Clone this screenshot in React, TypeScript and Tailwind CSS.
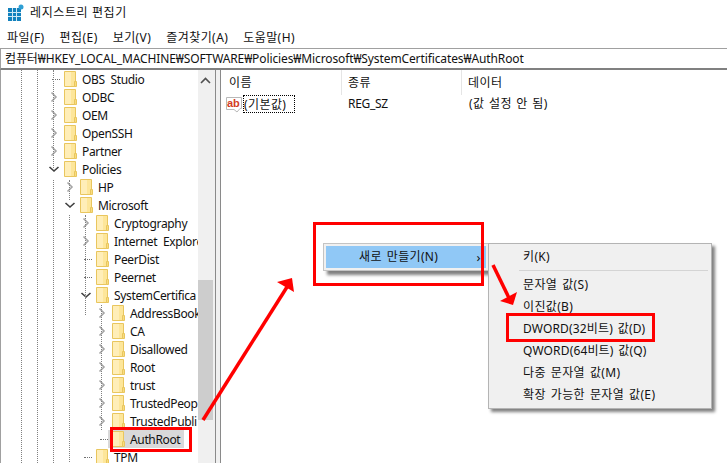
import React from 'react';

const FONT = '[font-family:"Noto_Sans","Noto_Sans_CJK_KR",sans-serif]';
const KO = 'tracking-[0.35px] [word-spacing:1.5px]';

type Node = { label: string; depth: number; mark: 'closed' | 'open' | 'none'; selected?: boolean };

const TREE: Node[] = [
    { label: 'OBS Studio', depth: 0, mark: 'none' },
    { label: 'ODBC', depth: 0, mark: 'closed' },
    { label: 'OEM', depth: 0, mark: 'closed' },
    { label: 'OpenSSH', depth: 0, mark: 'closed' },
    { label: 'Partner', depth: 0, mark: 'closed' },
    { label: 'Policies', depth: 0, mark: 'open' },
    { label: 'HP', depth: 1, mark: 'closed' },
    { label: 'Microsoft', depth: 1, mark: 'open' },
    { label: 'Cryptography', depth: 2, mark: 'closed' },
    { label: 'Internet Explore', depth: 2, mark: 'closed' },
    { label: 'PeerDist', depth: 2, mark: 'none' },
    { label: 'Peernet', depth: 2, mark: 'none' },
    { label: 'SystemCertifica', depth: 2, mark: 'open' },
    { label: 'AddressBook', depth: 3, mark: 'closed' },
    { label: 'CA', depth: 3, mark: 'closed' },
    { label: 'Disallowed', depth: 3, mark: 'closed' },
    { label: 'Root', depth: 3, mark: 'closed' },
    { label: 'trust', depth: 3, mark: 'closed' },
    { label: 'TrustedPeop', depth: 3, mark: 'closed' },
    { label: 'TrustedPubli', depth: 3, mark: 'closed' },
    { label: 'AuthRoot', depth: 3, mark: 'none', selected: true },
    { label: 'TPM', depth: 2, mark: 'none' },
];

const INDENT = ['pl-[47px]', 'pl-[63px]', 'pl-[79px]', 'pl-[95px]'];

function Folder() {
    return (
        <svg width="13" height="16" viewBox="0 0 13 16" className="shrink-0">
            <path d="M0.5 0.5H11.5V15.5H0.5Z" fill="#fde69a" stroke="#e9c65e" />
            <path d="M1 1H7V15H1Z" fill="#ffeeb8" />
            <path d="M10.5 10.5H12.5V15.5H10.5Z" fill="#f8dc80" stroke="#e9c65e" />
        </svg>
    );
}

function Mark({ type }: { type: Node['mark'] }) {
    if (type === 'closed') {
        return (
            <svg width="12" height="12" viewBox="0 0 12 12" className="shrink-0">
                <path d="M3.5 1.5L8 6L3.5 10.5" fill="none" stroke="#a6a6a6" strokeWidth="1.6" />
            </svg>
        );
    }
    if (type === 'open') {
        return (
            <svg width="12" height="12" viewBox="0 0 12 12" className="shrink-0">
                <path d="M1.5 4L6 8L10.5 4" fill="none" stroke="#404040" strokeWidth="1.6" />
            </svg>
        );
    }
    return (
        <div className="w-3 shrink-0 flex justify-end">
            <div className="w-[8px] border-t border-dotted border-[#707070]" />
        </div>
    );
}

function TreeRow({ node }: { node: Node }) {
    return (
        <div className={`h-[18px] flex items-center ${INDENT[node.depth]}`}>
            <Mark type={node.mark} />
            <div className={`h-[18px] flex items-center pl-[4px] ${node.selected ? 'bg-[#d9d9d9]' : ''}`}>
                <Folder />
                <span className="ml-[1px] pl-[4px] pr-[4px] h-[18px] leading-[20px] whitespace-nowrap tracking-[-0.35px] [word-spacing:3px]">
                    {node.label}
                </span>
            </div>
        </div>
    );
}

function Guide({ className }: { className: string }) {
    return <div className={`absolute w-0 border-l border-dotted border-[#808080] ${className}`} />;
}

function SubItem({ children, latin }: { children: React.ReactNode; latin?: boolean }) {
    return (
        <div className={`h-[22px] leading-[22px] pl-[34px] whitespace-nowrap ${latin ? 'tracking-[0.15px] [word-spacing:1.5px]' : KO}`}>
            {children}
        </div>
    );
}

function AbIcon() {
    return (
        <svg width="16" height="17" viewBox="0 0 16 17" className="shrink-0">
            <path d="M0.5 1.5H15.5V12.5H14L11 16L8 13.5H0.5Z" fill="#fff" stroke="#b9b9b9" />
            <text x="1" y="10.5" fontSize="11" fontWeight="700" fill="#d23c1e" fontFamily="Liberation Sans">ab</text>
        </svg>
    );
}

export default function App() {
    return (
        <div className={`relative w-[727px] h-[463px] overflow-hidden bg-white text-[12px] text-[#111] ${FONT}`}>
            {/* Title bar */}
            <div className="h-[24px] flex items-center pl-[8px] pt-[1px] gap-[6px]">
                <svg width="16" height="17" viewBox="0 0 16 17" className="shrink-0">
                    <rect x="0" y="4" width="13" height="13" fill="#1281bd" />
                    <path d="M4.5 4V17M8.5 4V17M0 8.5H13M0 12.5H13" stroke="#cfe8f4" strokeWidth="1" />
                    <circle cx="13" cy="3" r="2.5" fill="#2f9fd4" />
                </svg>
                <span className="tracking-[0.6px]">레지스트리 편집기</span>
            </div>
            {/* Menu bar */}
            <div className="h-[24px] flex items-center pl-[7px] pt-[4px] gap-[15px] tracking-[0.42px]">
                <span>파일(F)</span>
                <span>편집(E)</span>
                <span>보기(V)</span>
                <span>즐겨찾기(A)</span>
                <span>도움말(H)</span>
            </div>
            {/* Address bar */}
            <div className="h-[22px] border-t border-l border-t-[#a0a0a0] border-l-[#a0a0a0] border-b-2 border-b-[#808080] flex items-center pl-[4px] whitespace-nowrap tracking-[-0.11px]">
                컴퓨터₩HKEY_LOCAL_MACHINE₩SOFTWARE₩Policies₩Microsoft₩SystemCertificates₩AuthRoot
            </div>

            <div className="flex h-[393px]">
                {/* Tree */}
                <div className="relative w-[215px] shrink-0 flex overflow-hidden border-l border-[#a0a0a0]">
                    <div className="relative w-[197px] shrink-0 overflow-hidden">
                        {TREE.map((node) => (
                            <TreeRow key={node.label} node={node} />
                        ))}
                        <Guide className="left-[20px] top-0 h-full" />
                        <Guide className="left-[36px] top-0 h-full" />
                        <Guide className="left-[52px] top-0 h-[98px]" />
                        <Guide className="left-[52px] top-[110px] h-full" />
                        <Guide className="left-[68px] top-[110px] h-[20px]" />
                        <Guide className="left-[68px] top-[145px] h-full" />
                        <Guide className="left-[84px] top-[145px] h-[100px]" />
                        <Guide className="left-[100px] top-[235px] h-[125px]" />
                    </div>
                    <div className="w-[17px] shrink-0 bg-[#f0f0f0] flex flex-col">
                        <div className="h-[210px] w-[15px] flex justify-center pt-[7px]">
                            <svg width="11" height="7" viewBox="0 0 11 7">
                                <path d="M1 6L5.5 1.5L10 6" fill="none" stroke="#505050" strokeWidth="1.6" />
                            </svg>
                        </div>
                        <div className="h-[140px] w-[15px] bg-[#cdcdcd]" />
                    </div>
                </div>
                {/* Splitter */}
                <div className="w-[6px] shrink-0 border-x border-[#8a8a8a] bg-[#f0f0f0]" />
                {/* List */}
                <div className="flex-1 min-w-0 relative">
                    <div className="h-[25px] flex items-center tracking-[0.5px]">
                        <div className="w-[121px] h-[25px] pl-[8px] leading-[26px] border-r border-[#e5e5e5]">이름</div>
                        <div className="w-[120px] h-[25px] pl-[6px] leading-[26px] border-r border-[#e5e5e5]">종류</div>
                        <div className="pl-[6px] leading-[26px]">데이터</div>
                    </div>
                    <div className="h-[18px] flex items-center pl-[5px]">
                        <AbIcon />
                        <span className="ml-[1px] w-[52px] shrink-0 h-[18px] leading-[17px] border border-dotted border-black whitespace-nowrap tracking-[0.4px]">(기본값)</span>
                        <span className="ml-[53px] w-[121px] shrink-0 tracking-[-0.3px]">REG_SZ</span>
                        <span className="tracking-[0.4px] [word-spacing:1px]">(값 설정 안 됨)</span>
                    </div>
                </div>
            </div>

            {/* Context menu */}
            <div className="absolute left-[323px] top-[243px] w-[166px] h-[28px] bg-[#f0f0f0] border border-[#c4c4c4] p-[2px] shadow-[4px_4px_3px_#808080]">
                <div className={`h-[22px] bg-[#90c8f6] flex items-center justify-between pl-[33px] pr-[5px] leading-[22px] ${KO}`}>
                    <span>새로 만들기(N)</span>
                    <span className="text-[13px]">›</span>
                </div>
            </div>
            <div className="absolute left-[488px] top-[243px] w-[224px] h-[166px] bg-[#f0f0f0] border border-[#b4b4b4] pt-[2px] shadow-[3px_3px_3px_#808080]">
                <SubItem>키(K)</SubItem>
                <div className="h-[1px] bg-[#d4d4d4] ml-[30px] mr-[3px] mt-[2px] mb-[3px]" />
                <SubItem>문자열 값(S)</SubItem>
                <SubItem>이진값(B)</SubItem>
                <SubItem latin>DWORD(32비트) 값(D)</SubItem>
                <SubItem latin>QWORD(64비트) 값(Q)</SubItem>
                <SubItem>다중 문자열 값(M)</SubItem>
                <SubItem>확장 가능한 문자열 값(E)</SubItem>
            </div>

            {/* Red annotations */}
            <div className="absolute left-[110px] top-[427px] w-[82px] h-[25px] border-[3px] border-[#ff0000]" />
            <div className="absolute left-[313px] top-[222px] w-[171px] h-[64px] border-[3px] border-[#ff0000]" />
            <div className="absolute left-[506px] top-[313px] w-[149px] h-[29px] border-[3px] border-[#ff0000]" />
            <svg width="727" height="463" viewBox="0 0 727 463" className="absolute left-0 top-0 pointer-events-none">
                <path d="M203 420L287 287" stroke="#ff0000" strokeWidth="3.5" fill="none" />
                <path d="M292 278L277 282L294 292Z" fill="#ff0000" />
                <path d="M493 265L509 298" stroke="#ff0000" strokeWidth="3.5" fill="none" />
                <path d="M513 305L500 301L517 292Z" fill="#ff0000" />
            </svg>
        </div>
    );
}
